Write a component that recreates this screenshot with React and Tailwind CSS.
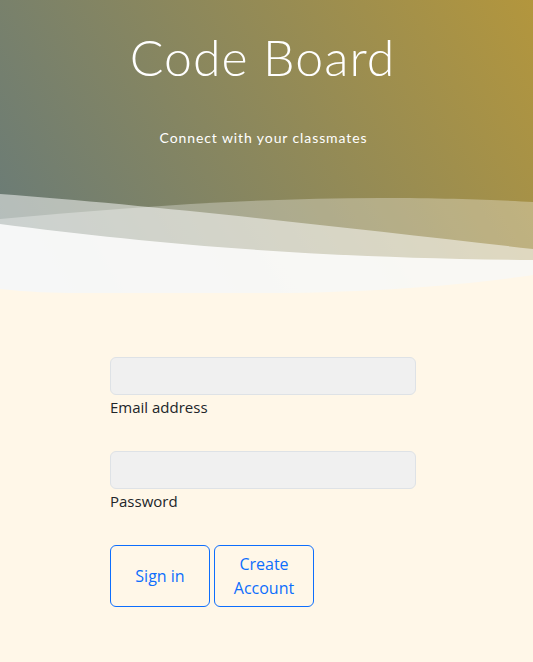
import React from 'react';

function Waves() {
  return (
    <svg className="block w-full h-[110px]" viewBox="0 0 533 110" preserveAspectRatio="none">
      <path d="M0,36 C120,25 250,15 380,15 C450,15 500,17 533,19 L533,110 L0,110 Z" fill="rgba(255,255,255,0.3)" />
      <path d="M0,11 C150,22 350,45 533,66 L533,110 L0,110 Z" fill="rgba(255,255,255,0.5)" />
      <path d="M0,41 C150,60 300,75 533,77 L533,110 L0,110 Z" fill="rgba(255,255,255,0.82)" />
      <path d="M0,106 C30,109 50,110 80,110 L290,110 C400,108 480,100 533,92 L533,110 L0,110 Z" fill="#fff7e8" />
    </svg>
  );
}

export default function App() {
  return (
    <div className="min-h-screen bg-[#fff7e8] font-['Open_Sans',sans-serif] text-[#212529]">
      {/* Header */}
      <div className="bg-[linear-gradient(60deg,#667a7a,#b3963d)] flex flex-col items-center">
        <h1 className="mt-[25px] pr-[8px] font-['Lato',sans-serif] font-light text-[50px] leading-[64px] tracking-[1px] text-white">
          Code Board
        </h1>
        <p className="mt-[39px] pr-[6px] font-['Lato',sans-serif] text-[14px] leading-[20px] tracking-[0.9px] text-white">
          Connect with your classmates
        </p>
        <div className="w-full mt-[35px]">
          <Waves />
        </div>
      </div>

      {/* Form */}
      <div className="w-[306px] ml-[110px] pt-[64px] pb-[57px]">
        <div className="mb-8">
          <input className="block w-full h-[38px] rounded-md bg-[#f0f0f0] border border-[#dee2e6] outline-none" />
          <label className="block text-[15px] leading-6">Email address</label>
        </div>
        <div className="mb-8">
          <input type="password" className="block w-full h-[38px] rounded-md bg-[#f0f0f0] border border-[#dee2e6] outline-none" />
          <label className="block text-[15px] leading-6">Password</label>
        </div>
        <div className="flex gap-1">
          <button className="w-[100px] rounded-md border border-[#0d6efd] text-[#0d6efd] text-[16px] leading-6">
            Sign in
          </button>
          <button className="w-[100px] py-1.5 rounded-md border border-[#0d6efd] text-[#0d6efd] text-[16px] leading-6">
            Create Account
          </button>
        </div>
      </div>
    </div>
  );
}
